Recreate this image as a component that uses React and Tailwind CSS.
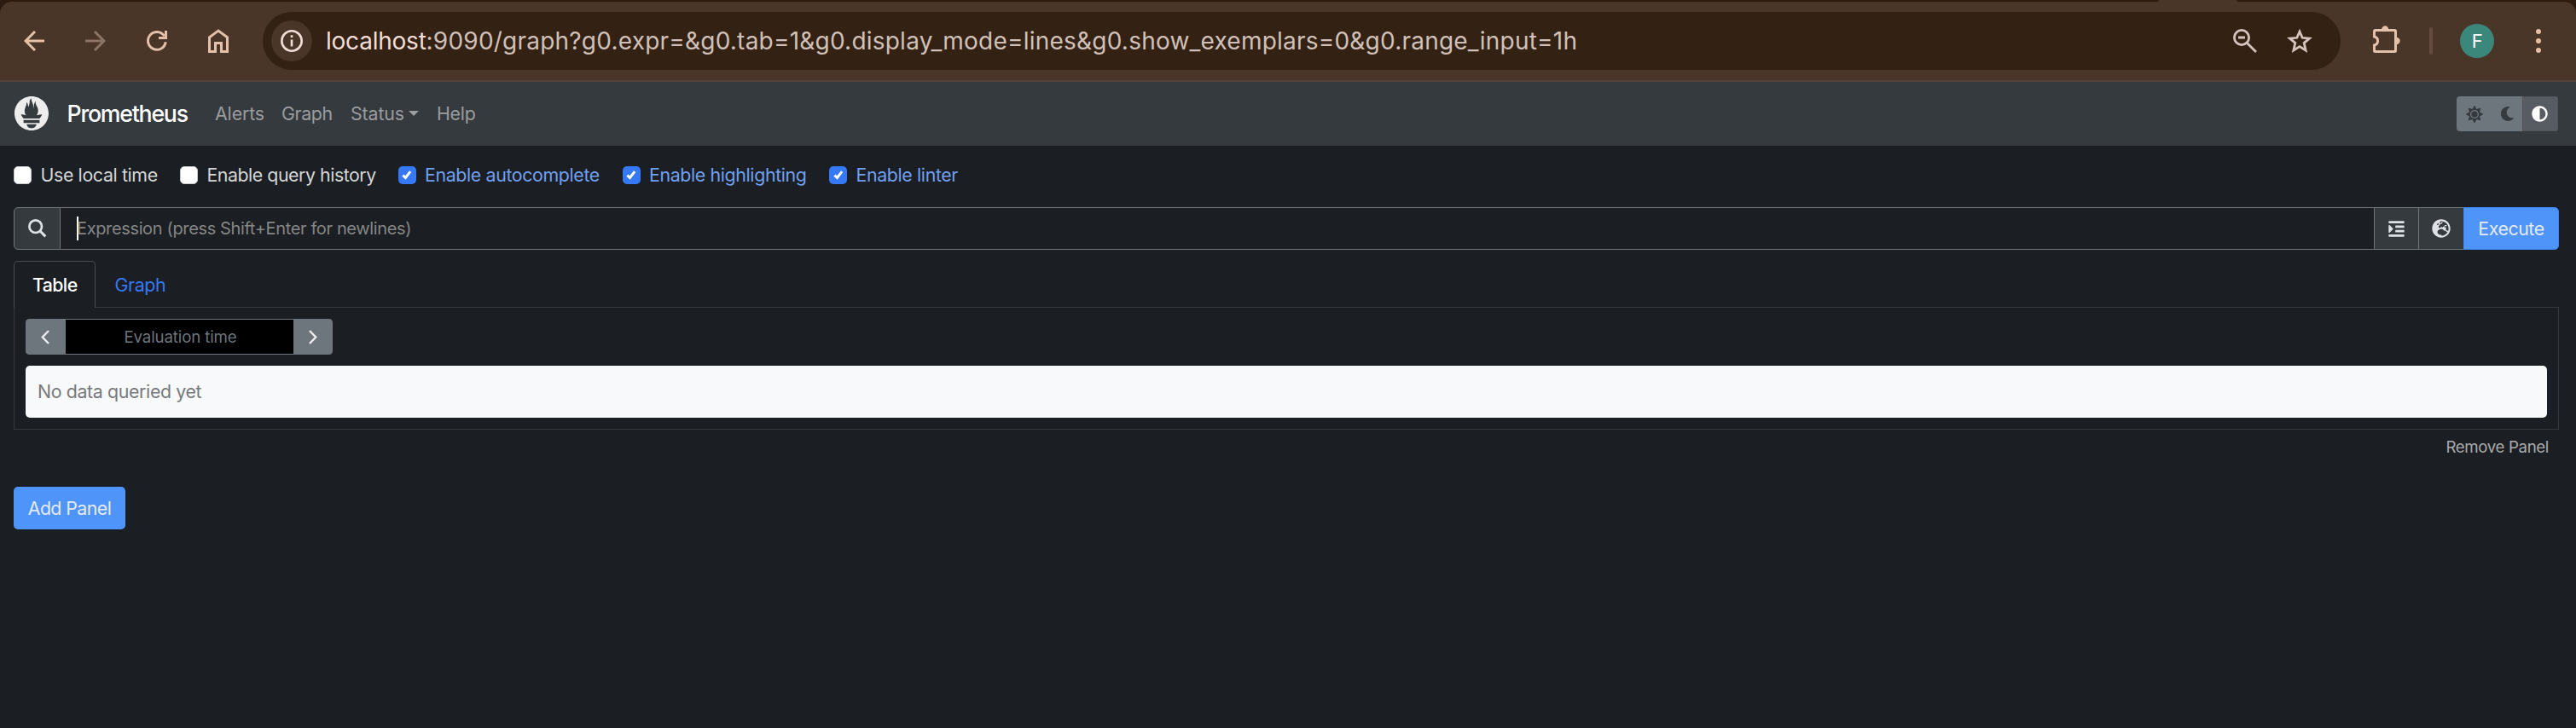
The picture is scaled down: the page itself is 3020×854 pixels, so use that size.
import React from 'react';
import { SiPrometheus } from 'react-icons/si';
import { FaGlobeEurope, FaSun, FaAdjust, FaMoon, FaIndent } from 'react-icons/fa';

function BackArrow() {
  return (
    <svg className="size-6" viewBox="0 0 24 24" fill="none" stroke="currentColor" strokeWidth="3">
      <path d="M24 12H2.5M13 1L2 12l11 11" />
    </svg>
  );
}

function Reload() {
  return (
    <svg className="size-6" viewBox="0 0 24 24" fill="none" stroke="currentColor" strokeWidth="3">
      <path d="M22.2 13.2A10.4 10.4 0 1 1 20.6 6.2" />
      <path d="M22.5 0V8.5H14" />
    </svg>
  );
}

function Home() {
  return (
    <svg className="h-7 w-6" viewBox="0 0 24 28" fill="none" stroke="currentColor" strokeWidth="3">
      <path d="M1.5 26.5V9.8L12 2l10.500 7.800V26.500H15.500V16.500H8.500V26.500Z" />
    </svg>
  );
}

function Info() {
  return (
    <svg className="size-[26px]" viewBox="0 0 26 26" fill="none" stroke="currentColor" strokeWidth="2.600">
      <circle cx="13" cy="13" r="11.700" />
      <path d="M13 11.500V19.500M13 6.300V9" />
    </svg>
  );
}

function ZoomOut() {
  return (
    <svg className="size-7" viewBox="0 0 28 28" fill="none" stroke="currentColor" strokeWidth="2.800">
      <circle cx="10" cy="10" r="8.600" />
      <path d="M16.200 16.200L27 27M6 10h8" />
    </svg>
  );
}

function Star() {
  return (
    <svg className="h-[30px] w-[30px]" viewBox="0 0 30 30" fill="none" stroke="currentColor" strokeWidth="2.800">
      <path d="M15 4L18.200 11.300L26.500 12.100L20.200 17.400L22.100 26L15 21.600L7.900 26L9.800 17.400L3.500 12.100L11.800 11.300Z" />
    </svg>
  );
}

function Puzzle() {
  return (
    <svg className="size-8" viewBox="0 0 32 32" fill="none" stroke="currentColor" strokeWidth="3">
      <path d="M1.500 13V6.500a1 1 0 0 1 1-1H25.500a1 1 0 0 1 1 1V29.500a1 1 0 0 1-1 1H2.500a1 1 0 0 1-1-1V23A5.100 5.100 0 0 0 1.500 13Z" />
      <path d="M10 5a4.200 4.700 0 0 1 8.400 0ZM27 13.800a4.700 4.200 0 0 1 0 8.400Z" fill="currentColor" stroke="none" />
    </svg>
  );
}

function Search() {
  return (
    <svg className="size-[22px]" viewBox="0 0 22 22" fill="none" stroke="currentColor" strokeWidth="2.700">
      <circle cx="8.700" cy="8.700" r="7.300" />
      <path d="M14 14L20.300 20.300" strokeWidth="3.100" />
    </svg>
  );
}

function Chevron({ className }) {
  return (
    <svg className={className} viewBox="0 0 10 17" fill="none" stroke="currentColor" strokeWidth="2.400">
      <path d="M9 1L1.800 8.500L9 16" />
    </svg>
  );
}

function Check({ label, checked, className = '' }) {
  return (
    <label className={`flex items-center gap-[10.5px] ${className}`}>
      {checked ? (
        <span className="flex size-[21px] shrink-0 items-center justify-center rounded-[5px] bg-[#3579f6] text-white">
          <svg className="size-[12px]" viewBox="0 0 13 13" fill="none" stroke="currentColor" strokeWidth="3.200">
            <path d="M1.500 7.200L4.800 10.300L11 2.300" />
          </svg>
        </span>
      ) : (
        <span className="size-[21px] shrink-0 rounded-[5px] border border-[#c4c8cc] bg-white" />
      )}
      <span className={checked ? 'whitespace-nowrap text-[#70a0f2]' : 'whitespace-nowrap text-[#d5d6d7]'}>{label}</span>
    </label>
  );
}

function BrowserBar() {
  return (
    <header className="bg-[#2d1b10]">
      <div className="flex h-0.5 justify-end pr-[397px]">
        <div className="w-[93px] rounded-t-sm bg-[#4a3628]" />
      </div>
      <div className="flex h-[94px] items-center rounded-t-[14px] border-b-2 border-[#54433b] bg-[#4a3628] pl-7 text-[#e2c0aa]">
        <BackArrow />
        <span className="ml-12 -scale-x-100 text-[#8b7365]"><BackArrow /></span>
        <span className="ml-12"><Reload /></span>
        <span className="ml-12"><Home /></span>
        <div className="ml-10 flex h-[68px] w-[2436px] items-center rounded-full bg-[#332114] pl-[10px]">
          <span className="flex size-12 items-center justify-center rounded-full bg-[#4a3628] text-[#f0ded6]"><Info /></span>
          <span className="ml-4 flex-1 text-[28px] whitespace-nowrap tracking-[0.22px] text-[#d0c0b7]">
            <span className="tracking-[-0.23px] text-[#f0ded6]">localhost</span>:9090/graph?g0.expr=&amp;g0.tab=1&amp;g0.display_mode=lines&amp;g0.show_exemplars=0&amp;g0.range_input=1h
          </span>
          <span className="mr-[35px] text-[#d3c3bb]"><ZoomOut /></span>
          <span className="mr-[33px] text-[#d3c3bb]"><Star /></span>
        </div>
        <span className="mb-1 ml-[38px]"><Puzzle /></span>
        <span className="ml-[34px] h-8 w-1 rounded-full bg-[#664c40]" />
        <span className="ml-8 flex size-10 items-center justify-center rounded-full bg-[#3c877b] text-[22px] text-white">F</span>
        <span className="ml-[49px] flex flex-col gap-[5px]">
          <i className="size-1.5 rounded-full bg-[#e2c0aa]" />
          <i className="size-1.5 rounded-full bg-[#e2c0aa]" />
          <i className="size-1.5 rounded-full bg-[#e2c0aa]" />
        </span>
      </div>
    </header>
  );
}

function Navbar() {
  return (
    <nav className="flex h-[75px] items-center bg-[#353a3e] pr-[21px] pl-[17px] text-[#9a9c9e]">
      <SiPrometheus className="mb-0.5 size-10 text-[#ededed]" />
      <span className="mb-0.5 ml-[21.5px] w-[173.5px] text-[26.67px] font-medium tracking-[-1.22px] text-white">Prometheus</span>
      <span className="mb-px w-[78px] tracking-[-0.12px]">Alerts</span>
      <span className="mb-px w-[81px]">Graph</span>
      <span className="mb-px flex w-[101px] items-center gap-[5px] tracking-[-0.1px]">
        Status
        <svg className="h-1.5 w-3" viewBox="0 0 12 6" fill="currentColor"><path d="M0 0H12L6 6Z" /></svg>
      </span>
      <span className="mb-px flex-1 tracking-[-0.25px]">Help</span>
      <div className="flex h-[41px] overflow-hidden rounded-[4px] bg-[#6d757d] text-[#353a3e]">
        <span className="flex w-[42px] items-center justify-center"><FaSun className="size-[20px]" /></span>
        <span className="flex w-[35px] items-center justify-center"><FaMoon className="size-[17px]" /></span>
        <span className="flex w-[42px] items-center justify-center rounded-r-[4px] border border-[#4e555b] bg-[#565c62] pr-0.5 text-white"><FaAdjust className="size-[19px]" /></span>
      </div>
    </nav>
  );
}

export default function App() {
  return (
    <div className="min-h-[854px] w-[3020px] bg-[#1b1e22] font-['Inter',sans-serif] text-[21.33px] leading-8 tracking-[-0.36px]">
      <BrowserBar />
      <Navbar />
      <main className="pt-[18px] pr-5 pl-4">
        <div className="flex h-8 items-center">
          <Check label="Use local time" className="w-[195px]" />
          <Check label="Enable query history" className="w-[255.5px] tracking-[-0.46px]" />
          <Check label="Enable autocomplete" checked className="w-[263px]" />
          <Check label="Enable highlighting" checked className="w-[242.5px]" />
          <Check label="Enable linter" checked />
        </div>

        <div className="mt-[22px] flex h-[50px]">
          <div className="flex w-[55px] items-center justify-center rounded-l-[5px] border border-[#6f767c] bg-[#353a3e] text-[#dee2e6]"><Search /></div>
          <div className="flex flex-1 items-center border-y border-[#6f767c] pl-[19px]">
            <span className="h-7 w-0.5 shrink-0 bg-white" />
            <span className="-ml-[2px] text-[20px] text-[#858686]">Expression (press Shift+Enter for newlines)</span>
          </div>
          <div className="flex w-[52px] items-center justify-center border border-r-0 border-[#6f767c] bg-[#353a3e] text-[#dee2e6]"><FaIndent className="size-[21px]" /></div>
          <div className="flex w-[53px] items-center justify-center border border-r-0 border-[#6f767c] bg-[#353a3e] text-[#dee2e6]"><FaGlobeEurope className="size-[22px]" /></div>
          <button className="w-[112px] rounded-r-[5px] border border-[#3f86f8] bg-[#4f94f8] tracking-[-0.42px] text-[#e4eaf2]">Execute</button>
        </div>

        <div className="mt-[13px] flex h-[55px]">
          <div className="w-24 rounded-t-[5px] border border-b-0 border-[#474c50] pt-[11px] pl-[21px] font-medium tracking-[-0.6px] text-white">Table</div>
          <div className="flex-1 border-b border-[#353a3e] pt-3 pl-[22.5px] text-[#3579f6]">Graph</div>
        </div>
        <section className="h-[143px] border border-t-0 border-[#353a3e] px-[13px] pt-[13px]">
          <div className="flex h-[42px] w-[360px] overflow-hidden rounded-[4px] border border-[#6d757d] bg-[#6d757d] text-[#eceef0]">
            <span className="flex w-[46px] items-center justify-center pr-0.5"><Chevron className="h-[17px] w-2.5" /></span>
            <span className="flex w-[267px] items-center justify-center bg-black pt-0.5 pl-0.5 text-[18.67px] tracking-[-0.13px] text-[#6d757d]">Evaluation time</span>
            <span className="flex flex-1 items-center justify-center pl-px"><Chevron className="h-[17px] w-2.5 -scale-x-100" /></span>
          </div>
          <div className="mt-[13px] flex h-[61px] items-center rounded-[5px] bg-[#f8f9fb] pb-px pl-[14px] text-[#77797b]">No data queried yet</div>
        </section>

        <div className="flex h-10 items-center justify-end pt-px pr-[12px] text-[18.67px] text-[#a9aaab]">Remove Panel</div>
        <button className="mt-[27px] h-[50px] w-[131px] rounded-[5px] bg-[#4f94f8] tracking-[-0.57px] text-[#e4eaf2]">Add Panel</button>
      </main>
    </div>
  );
}
